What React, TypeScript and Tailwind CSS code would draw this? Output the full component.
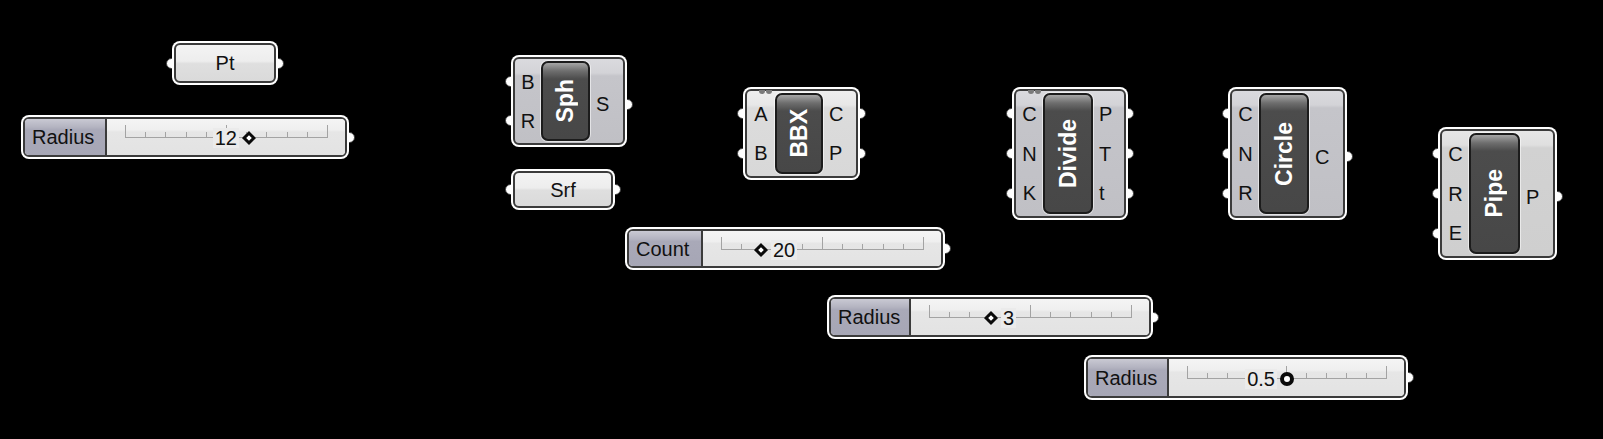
import React from "react";

const FONT: React.CSSProperties = { fontFamily: '"Liberation Sans", Arial, sans-serif' };

function PortDot({ side, y }: { side: "l" | "r"; y: number }) {
  return (
    <div
      className={
        side === "l"
          ? "absolute left-[-6px] h-[11px] w-[12px] rounded-full border-[1.5px] border-[#3a3a3a] bg-white"
          : "absolute right-[-6px] h-[11px] w-[12px] rounded-full border-[1.5px] border-[#3a3a3a] bg-white"
      }
      style={{ top: y - 5.5 }}
    />
  );
}

function Place({
  x,
  y,
  w,
  h,
  left = [],
  right = [],
  children,
}: {
  x: number;
  y: number;
  w: number;
  h: number;
  left?: number[];
  right?: number[];
  children: React.ReactNode;
}) {
  return (
    <div className="absolute" style={{ left: x, top: y, width: w, height: h }}>
      {left.map((py, i) => (
        <PortDot key={"l" + i} side="l" y={py} />
      ))}
      {right.map((py, i) => (
        <PortDot key={"r" + i} side="r" y={py} />
      ))}
      {children}
    </div>
  );
}

function Shell({ body, children }: { body: string; children: React.ReactNode }) {
  return (
    <div className="relative h-full w-full rounded-[8px] bg-white p-[2px]">
      <div className={"flex h-full w-full overflow-hidden rounded-[6px] border-2 border-[#3b3b3b] " + body}>
        {children}
      </div>
    </div>
  );
}

const LIGHT = "bg-[linear-gradient(to_bottom,#f3f3f3_0%,#ededed_45%,#dfdfdf_52%,#dadada_100%)]";

function Param({ x, y, w, h, label }: { x: number; y: number; w: number; h: number; label: string }) {
  return (
    <Place x={x} y={y} w={w} h={h} left={[h / 2]} right={[h / 2]}>
      <Shell body={LIGHT + " items-center justify-center"}>
        <span className="text-[20px] leading-none text-[#111]">{label}</span>
      </Shell>
    </Place>
  );
}

function portYs(h: number, n: number, single: boolean) {
  if (n === 1 && single) return [h / 2 + 3];
  const pad = 7;
  const slot = (h - 2 * pad) / n;
  return Array.from({ length: n }, (_, i) => pad + slot * (i + 0.5));
}

function Comp({
  x,
  y,
  w,
  h,
  inputs,
  outputs,
  name,
  leftW,
  blockW,
  body,
  dots,
}: {
  x: number;
  y: number;
  w: number;
  h: number;
  inputs: string[];
  outputs: string[];
  name: string;
  leftW: number;
  blockW: number;
  body: string;
  dots?: boolean;
}) {
  const single = outputs.length === 1;
  return (
    <Place x={x} y={y} w={w} h={h} left={portYs(h, inputs.length, false)} right={portYs(h, outputs.length, true)}>
      <Shell body={body}>
        <div className="flex flex-none flex-col py-[3px]" style={{ width: leftW }}>
          {inputs.map((s, i) => (
            <div key={i} className="flex flex-1 items-center justify-center text-[20px] leading-none text-[#111]">
              {s}
            </div>
          ))}
        </div>
        <div className="flex flex-none py-[2px]" style={{ width: blockW }}>
          <div className="flex flex-1 items-center justify-center rounded-[7px] border-2 border-[#1c1c1c] bg-[linear-gradient(to_bottom,#a6a6a6_0px,#6e6e6e_8px,#4c4c4c_16px,#474747_100%)] shadow-[0_0_0_1px_rgba(255,255,255,0.55)]">
            <span className="rotate-180 text-[23px] font-bold leading-none text-white [writing-mode:vertical-rl]">
              {name}
            </span>
          </div>
        </div>
        <div className={single ? "flex flex-1 flex-col pt-[9px] pb-[3px]" : "flex flex-1 flex-col py-[3px]"}>
          {outputs.map((s, i) => (
            <div key={i} className="flex flex-1 items-center pl-[6px] text-[20px] leading-none text-[#111]">
              {s}
            </div>
          ))}
        </div>
      </Shell>
      {dots && (
        <div className="absolute left-[16px] top-[3px] flex gap-[1px]">
          <div className="h-[4px] w-[6px] rounded-b-full bg-[#7a7a7a]" />
          <div className="h-[4px] w-[6px] rounded-b-full bg-[#7a7a7a]" />
        </div>
      )}
    </Place>
  );
}

function Slider({
  x,
  y,
  w,
  h,
  label,
  labelW,
  value,
  grip,
  textLeft,
  round,
}: {
  x: number;
  y: number;
  w: number;
  h: number;
  label: string;
  labelW: number;
  value: string;
  grip: number;
  textLeft: boolean;
  round?: boolean;
}) {
  const ticks = Array.from({ length: 11 }, (_, i) => i);
  const gripEl = round ? (
    <div className="h-[14px] w-[14px] flex-none rounded-full border-[4px] border-[#0a0a0a] bg-white" />
  ) : (
    <div className="flex h-[14px] w-[14px] flex-none items-center justify-center">
      <div className="h-[10px] w-[10px] rotate-45 border-[3px] border-[#0a0a0a] bg-white" />
    </div>
  );
  const text = <span className="bg-[#ebebeb] px-[2px] text-[20px] leading-none text-[#111]">{value}</span>;
  return (
    <Place x={x} y={y} w={w} h={h} right={[h / 2]}>
      <Shell body="">
        <div
          className="flex flex-none items-center border-r-2 border-[#3b3b3b] bg-[linear-gradient(to_bottom,#c9c9d3_0%,#b4b4c1_22%,#a9a9b8_30%,#a6a6b5_100%)] pl-[7px] text-[20px] leading-none text-[#111]"
          style={{ width: labelW }}
        >
          {label}
        </div>
        <div className="flex flex-1 items-center bg-[linear-gradient(to_bottom,#f4f4f4_0%,#efefef_30%,#e6e6e6_36%,#e3e3e3_100%)] pl-[18px] pr-[17px]">
          <div className="relative mb-[10px] flex h-[12px] flex-1 items-end justify-between border-b border-[#a3a3a3]">
            {ticks.map((i) => (
              <div
                key={i}
                className={i === 0 || i === 5 || i === 10 ? "h-[12px] w-px bg-[#a3a3a3]" : "h-[5px] w-px bg-[#a3a3a3]"}
              />
            ))}
            {textLeft ? (
              <div
                className="absolute top-[12px] flex -translate-y-1/2 items-center gap-[3px]"
                style={{ right: `calc(100% - ${grip + 7}px)` }}
              >
                {text}
                {gripEl}
              </div>
            ) : (
              <div className="absolute top-[12px] flex -translate-y-1/2 items-center gap-[3px]" style={{ left: grip - 7 }}>
                {gripEl}
                {text}
              </div>
            )}
          </div>
        </div>
      </Shell>
    </Place>
  );
}

const GRAY = "bg-[linear-gradient(to_bottom,#dadade_0px,#d3d3d7_14px,#c5c5ca_17px,#c0c0c5_100%)]";
const PALE = "bg-[linear-gradient(to_bottom,#eeeeee_0px,#e7e7e7_14px,#dcdcdc_17px,#d8d8d8_100%)]";
const PALE2 = "bg-[linear-gradient(to_bottom,#e6e6e6_0px,#dfdfdf_14px,#d2d2d2_17px,#cfcfcf_100%)]";

export default function App() {
  return (
    <div className="relative h-[439px] w-[1603px] overflow-hidden bg-black" style={FONT}>
      <Param x={172} y={41} w={106} h={44} label="Pt" />
      <Slider x={21} y={115} w={328} h={44} label="Radius" labelW={82} value="12" grip={124} textLeft />

      <Comp x={511} y={55} w={116} h={92} inputs={["B", "R"]} outputs={["S"]} name="Sph" leftW={26} blockW={49} body={GRAY} />
      <Param x={511} y={169} w={104} h={41} label="Srf" />

      <Comp
        x={743}
        y={87}
        w={117}
        h={93}
        inputs={["A", "B"]}
        outputs={["C", "P"]}
        name="BBX"
        leftW={28}
        blockW={48}
        body={PALE}
        dots
      />
      <Slider x={625} y={227} w={320} h={43} label="Count" labelW={74} value="20" grip={40} textLeft={false} />

      <Comp
        x={1012}
        y={87}
        w={116}
        h={133}
        inputs={["C", "N", "K"]}
        outputs={["P", "T", "t"]}
        name="Divide"
        leftW={27}
        blockW={50}
        body={GRAY}
        dots
      />
      <Comp
        x={1228}
        y={87}
        w={119}
        h={133}
        inputs={["C", "N", "R"]}
        outputs={["C"]}
        name="Circle"
        leftW={27}
        blockW={50}
        body={GRAY}
      />
      <Comp
        x={1438}
        y={127}
        w={119}
        h={133}
        inputs={["C", "R", "E"]}
        outputs={["P"]}
        name="Pipe"
        leftW={27}
        blockW={51}
        body={PALE2}
      />

      <Slider x={827} y={295} w={326} h={44} label="Radius" labelW={80} value="3" grip={62} textLeft={false} />
      <Slider x={1084} y={355} w={324} h={45} label="Radius" labelW={81} value="0.5" grip={100} textLeft round />
    </div>
  );
}
